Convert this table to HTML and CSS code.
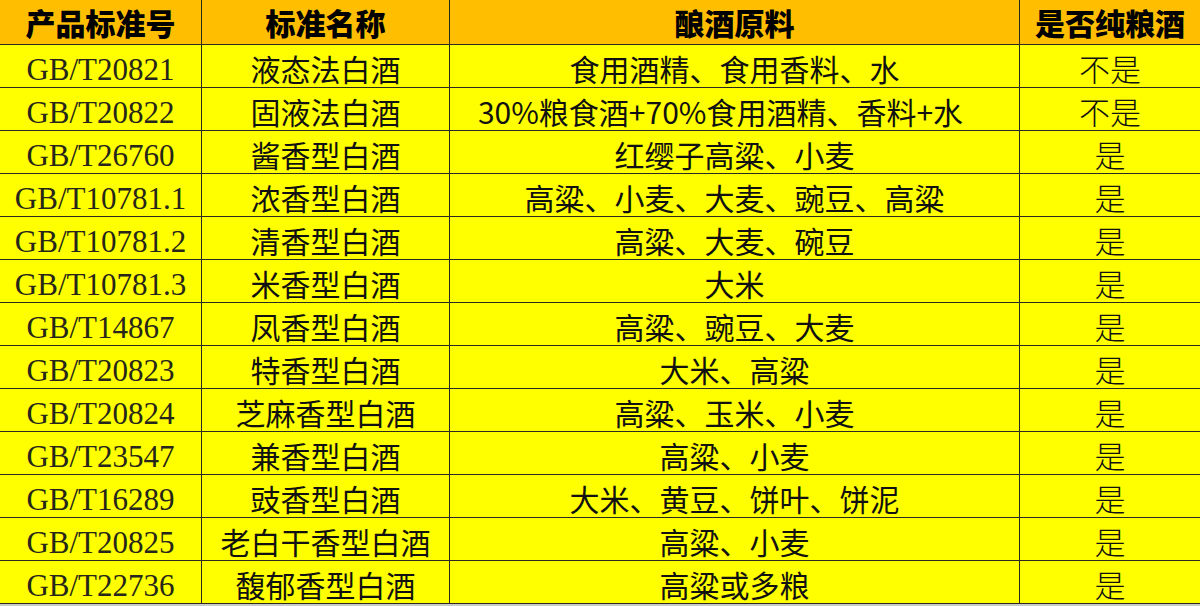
FILE: index.html
```html
<!DOCTYPE html>
<html lang="zh-CN">
<head>
<meta charset="utf-8">
<title>白酒标准</title>
<link rel="stylesheet" href="styles.css">
</head>
<body>
<div class="table">
  <div class="row head">
    <div class="cell c1">产品标准号</div>
    <div class="cell c2">标准名称</div>
    <div class="cell c3">酿酒原料</div>
    <div class="cell c4">是否纯粮酒</div>
  </div>
  <div class="row"><div class="cell c1 code">GB/T20821</div><div class="cell c2">液态法白酒</div><div class="cell c3">食用酒精、食用香料、水</div><div class="cell c4 thin">不是</div></div>
  <div class="row"><div class="cell c1 code">GB/T20822</div><div class="cell c2">固液法白酒</div><div class="cell c3 shift">30%粮食酒+70%食用酒精、香料+水</div><div class="cell c4 thin">不是</div></div>
  <div class="row"><div class="cell c1 code">GB/T26760</div><div class="cell c2">酱香型白酒</div><div class="cell c3">红缨子高粱、小麦</div><div class="cell c4 thin">是</div></div>
  <div class="row"><div class="cell c1 code">GB/T10781.1</div><div class="cell c2">浓香型白酒</div><div class="cell c3">高粱、小麦、大麦、豌豆、高粱</div><div class="cell c4 thin">是</div></div>
  <div class="row"><div class="cell c1 code">GB/T10781.2</div><div class="cell c2">清香型白酒</div><div class="cell c3">高粱、大麦、碗豆</div><div class="cell c4 thin">是</div></div>
  <div class="row"><div class="cell c1 code">GB/T10781.3</div><div class="cell c2">米香型白酒</div><div class="cell c3">大米</div><div class="cell c4 thin">是</div></div>
  <div class="row"><div class="cell c1 code">GB/T14867</div><div class="cell c2">凤香型白酒</div><div class="cell c3">高粱、豌豆、大麦</div><div class="cell c4 thin">是</div></div>
  <div class="row"><div class="cell c1 code">GB/T20823</div><div class="cell c2">特香型白酒</div><div class="cell c3">大米、高粱</div><div class="cell c4 thin">是</div></div>
  <div class="row"><div class="cell c1 code">GB/T20824</div><div class="cell c2">芝麻香型白酒</div><div class="cell c3">高粱、玉米、小麦</div><div class="cell c4 thin">是</div></div>
  <div class="row"><div class="cell c1 code">GB/T23547</div><div class="cell c2">兼香型白酒</div><div class="cell c3">高粱、小麦</div><div class="cell c4 thin">是</div></div>
  <div class="row"><div class="cell c1 code">GB/T16289</div><div class="cell c2">豉香型白酒</div><div class="cell c3">大米、黄豆、饼叶、饼泥</div><div class="cell c4 thin">是</div></div>
  <div class="row"><div class="cell c1 code">GB/T20825</div><div class="cell c2">老白干香型白酒</div><div class="cell c3">高粱、小麦</div><div class="cell c4 thin">是</div></div>
  <div class="row"><div class="cell c1 code">GB/T22736</div><div class="cell c2">馥郁香型白酒</div><div class="cell c3">高粱或多粮</div><div class="cell c4 thin">是</div></div>
</div>
</body>
</html>
```

FILE: styles.css
```css
html, body {
  margin: 0;
  padding: 0;
  background: #c9c9c9;
}
body {
  width: 1200px;
  height: 606px;
  overflow: hidden;
  font-family: "Noto Sans CJK SC", "Noto Sans", sans-serif;
  color: #111;
}
.table {
  display: flex;
  flex-direction: column;
  width: 1200px;
}
.row {
  display: grid;
  grid-template-columns: 202px 248px 570px 180px;
  height: 43px;
  background: #ffff00;
  border-bottom: 1px solid #2a2a20;
  box-sizing: border-box;
}
.row.head {
  height: 45px;
  background: #ffbf00;
}
.cell {
  display: flex;
  align-items: center;
  justify-content: center;
  font-size: 30px;
  line-height: 1;
  white-space: nowrap;
  padding-top: 3px;
  box-sizing: border-box;
}
.c1, .c2, .c3 {
  border-right: 1px solid #2a2a20;
}
.head .cell {
  font-weight: 900;
  font-size: 30px;
  padding-top: 0;
  color: #000;
}
.code {
  font-family: "Liberation Serif", "Times New Roman", serif;
  font-size: 31px;
  padding-top: 6px;
  color: #26261a;
}
.shift {
  padding-right: 28px;
}
.thin {
  font-weight: 300;
  font-size: 31px;
}
```
